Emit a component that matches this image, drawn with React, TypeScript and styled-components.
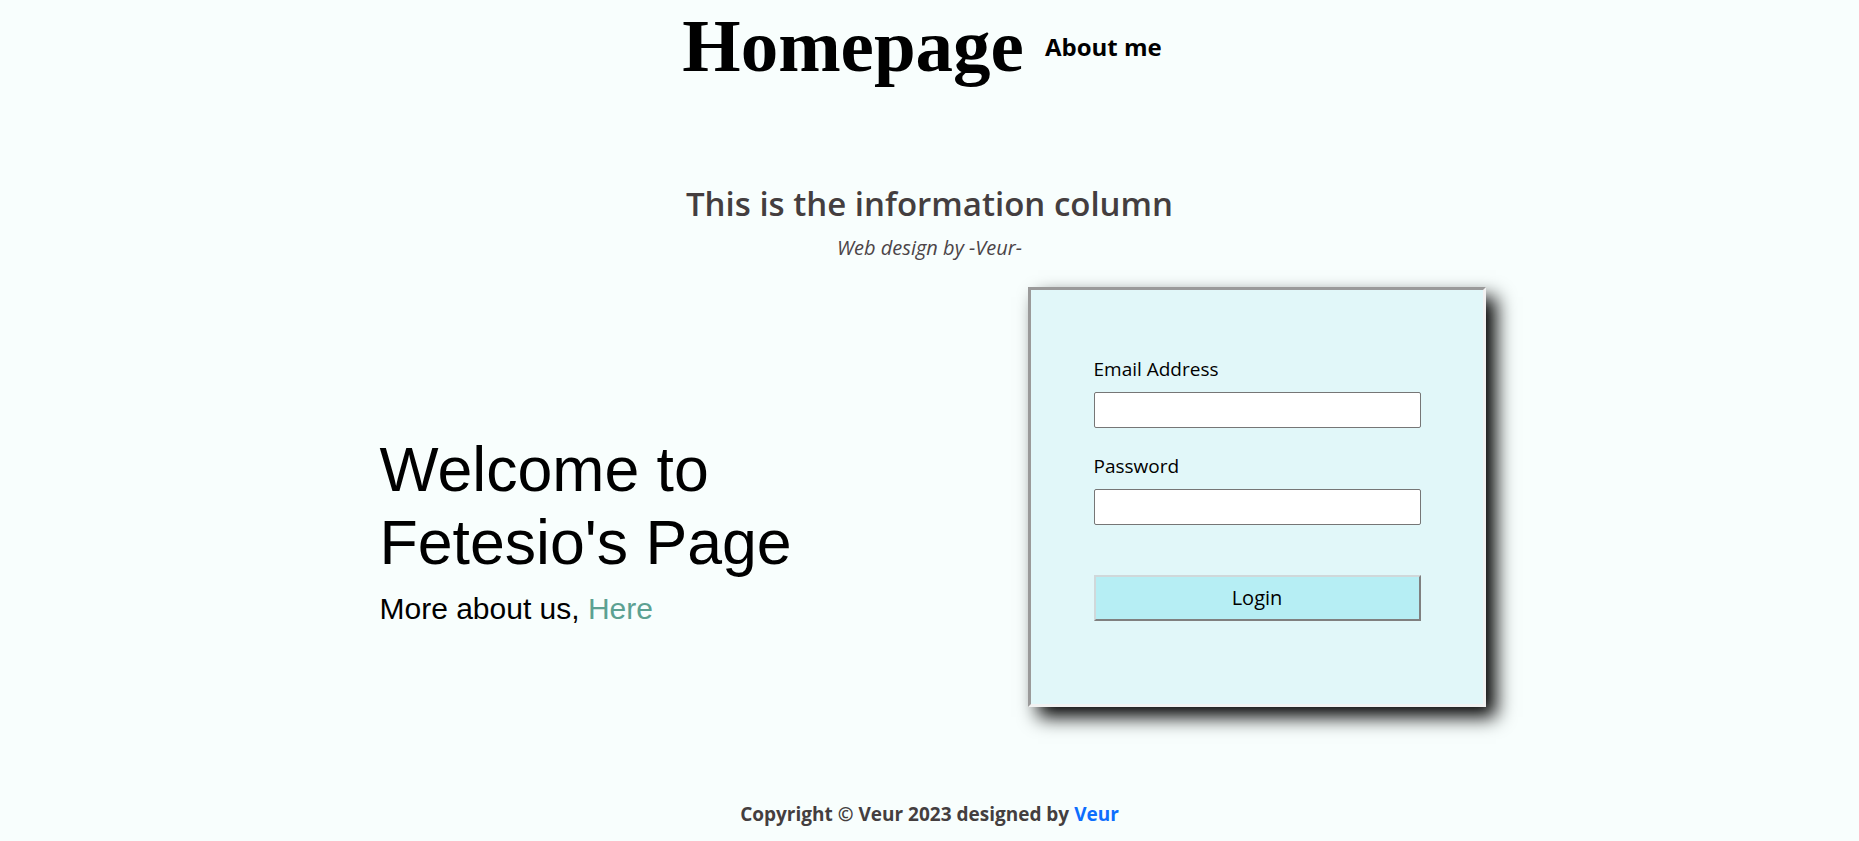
import React from "react";
import styled, { createGlobalStyle } from "styled-components";

const GlobalStyle = createGlobalStyle`
  html, body {
    margin: 0;
    padding: 0;
    background: #f8fefd;
  }
  body {
    font-family: "Open Sans", "Noto Sans", sans-serif;
    color: #000;
  }
  * { box-sizing: border-box; }
`;

const Page = styled.div`
  min-height: 841px;
  display: flex;
  flex-direction: column;
`;

const Header = styled.header`
  display: flex;
  justify-content: center;
  align-items: center;
  gap: 21px;
  padding: 3px 15px 0 0;
`;

const Title = styled.h1`
  margin: 0;
  font-family: "Liberation Serif", "Times New Roman", serif;
  font-weight: 700;
  font-size: 75px;
  line-height: normal;
`;

const NavLink = styled.a`
  font-family: "Open Sans", sans-serif;
  font-weight: 700;
  font-size: 24px;
  color: #000;
  text-decoration: none;
`;

const Info = styled.section`
  text-align: center;
  margin-top: 95px;
`;

const InfoTitle = styled.h2`
  margin: 0;
  font-size: 33px;
  font-weight: 600;
  line-height: 1.2;
  color: #443e3f;
`;

const Credit = styled.p`
  margin: 9px 0 0;
  font-size: 20px;
  font-style: italic;
  line-height: 1.5;
  color: #4c4548;
`;

const Main = styled.main`
  display: grid;
  grid-template-columns: 660px 660px;
  justify-content: center;
  align-items: start;
  margin-top: 24px;
`;

const Welcome = styled.div`
  padding: 146px 0 0 110px;
  font-family: "Liberation Sans", Arial, sans-serif;
`;

const WelcomeTitle = styled.h1`
  margin: 0;
  font-size: 62.6px;
  font-weight: 400;
  line-height: 73px;
`;

const More = styled.p`
  margin: 13px 0 0;
  font-size: 30px;
  line-height: 1.15;
`;

const MoreLink = styled.a`
  color: #5ca192;
  text-decoration: none;
`;

const CardColumn = styled.div`
  padding-left: 98px;
`;

const Card = styled.form`
  width: 458px;
  height: 420px;
  background: #e1f7f9;
  border: 3px solid;
  border-color: #9a9a9a #f2f2f2 #f2f2f2 #9a9a9a;
  box-shadow: 10px 10px 18px #000;
  padding: 66px 62px 0 63px;
  display: flex;
  flex-direction: column;
`;

const Label = styled.label`
  font-size: 19px;
  line-height: 27px;
  margin-bottom: 9px;
`;

const Input = styled.input`
  width: 327px;
  height: 36px;
  border: 1px solid #767676;
  border-radius: 2px;
  background: #fff;
  margin-bottom: 25px;
`;

const LoginButton = styled.button`
  margin-top: 25px;
  width: 327px;
  height: 46px;
  background: #b6eef4;
  border: 2px solid;
  border-color: #d0d8da #808080 #808080 #d0d8da;
  font-family: "Open Sans", sans-serif;
  font-size: 20px;
  color: #000;
`;

const Footer = styled.footer`
  margin-top: 94px;
  text-align: center;
  font-size: 19px;
  font-weight: 700;
  line-height: 27px;
  color: #443e3f;
`;

const FooterLink = styled.a`
  color: #0d6efd;
  text-decoration: none;
`;

export default function App() {
  return (
    <>
      <GlobalStyle />
      <Page>
        <Header>
          <Title>Homepage</Title>
          <NavLink href="#">About me</NavLink>
        </Header>
        <Info>
          <InfoTitle>This is the information column</InfoTitle>
          <Credit>Web design by -Veur-</Credit>
        </Info>
        <Main>
          <Welcome>
            <WelcomeTitle>
              Welcome to
              <br />
              Fetesio's Page
            </WelcomeTitle>
            <More>
              More about us, <MoreLink href="#">Here</MoreLink>
            </More>
          </Welcome>
          <CardColumn>
            <Card onSubmit={(e) => e.preventDefault()}>
              <Label htmlFor="email">Email Address</Label>
              <Input id="email" type="email" />
              <Label htmlFor="password">Password</Label>
              <Input id="password" type="password" />
              <LoginButton type="submit">Login</LoginButton>
            </Card>
          </CardColumn>
        </Main>
        <Footer>
          Copyright © Veur 2023 designed by <FooterLink href="#">Veur</FooterLink>
        </Footer>
      </Page>
    </>
  );
}
